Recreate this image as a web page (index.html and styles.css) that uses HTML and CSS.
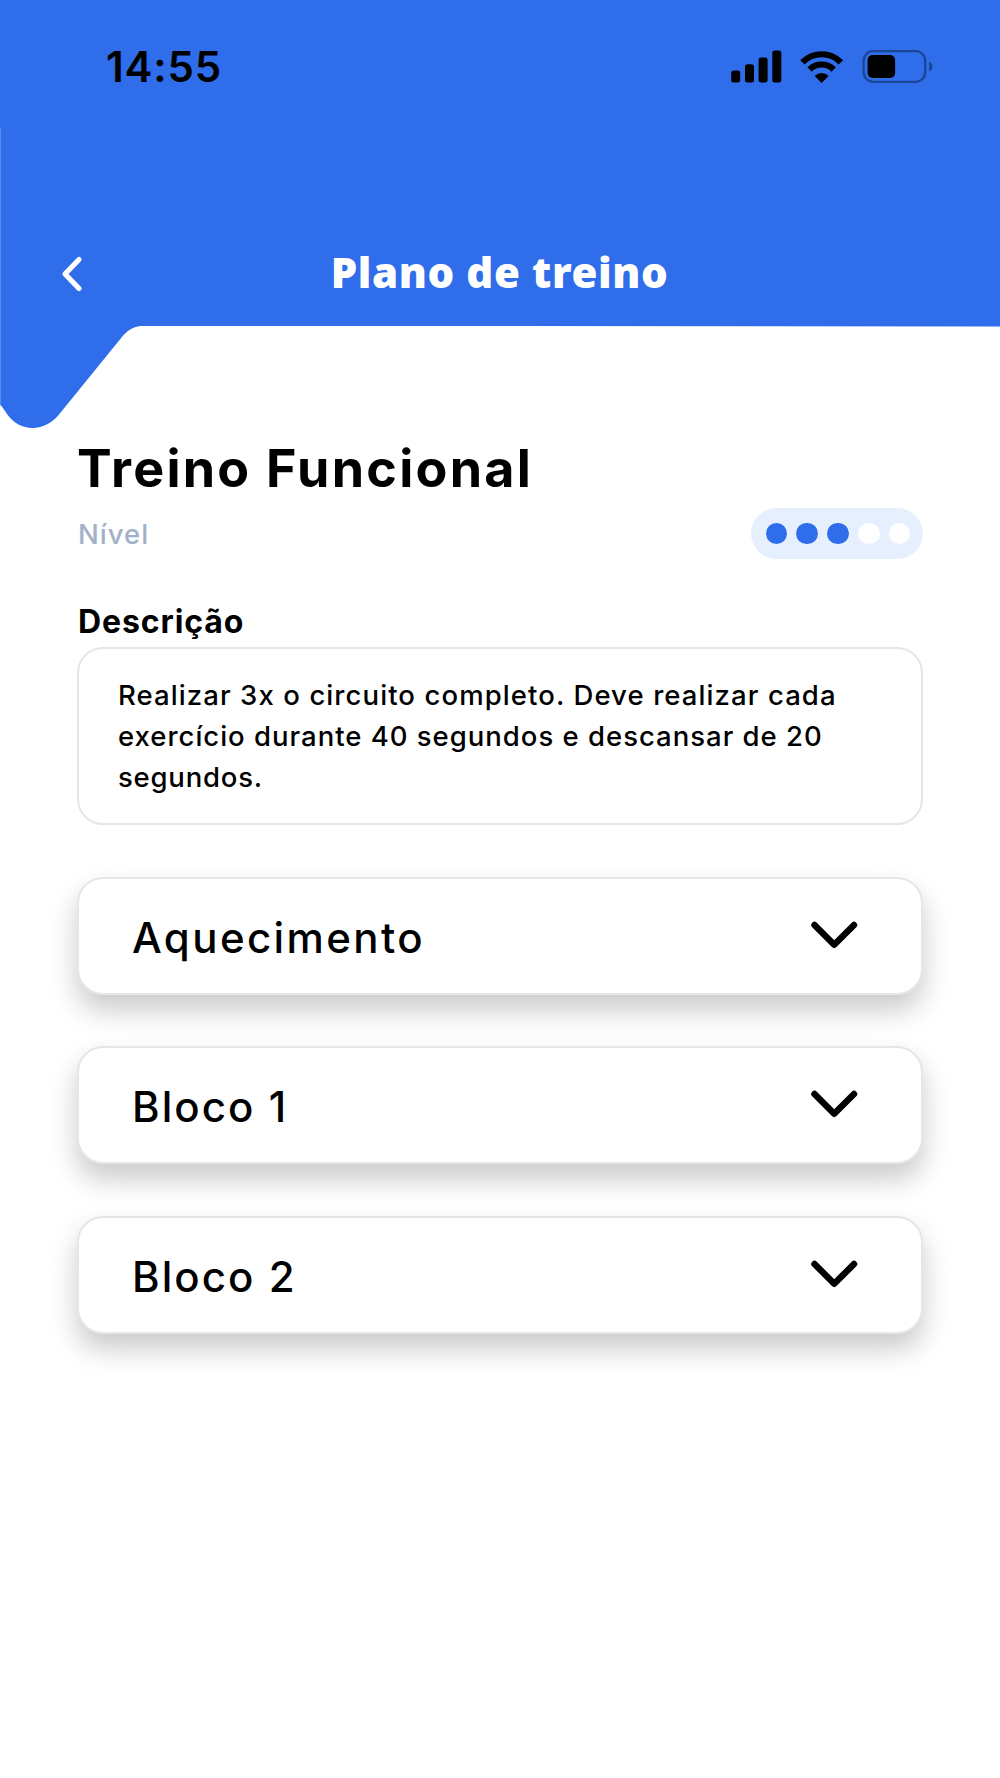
FILE: index.html
```html
<!DOCTYPE html>
<html lang="pt">
<head>
<meta charset="utf-8">
<title>Plano de treino</title>
<link rel="stylesheet" href="styles.css">
</head>
<body>
<header class="header">
  <div class="status">
    <span class="time">14:55</span>
    <svg class="status-icons" width="204" height="34" viewBox="0 0 204 34">
      <rect x="0.200" y="20.500" width="9" height="12" rx="2.500"/>
      <rect x="14" y="14.300" width="9" height="18.200" rx="2.500"/>
      <rect x="27.600" y="7.500" width="9" height="25" rx="2.500"/>
      <rect x="41.300" y="0.500" width="9" height="32" rx="2.500"/>
      <g fill="none" stroke="#000" stroke-width="6.200">
        <path d="M71.400 12.300A27 27 0 0 1 109.900 12.300"/>
        <path d="M78.600 19.500A17 17 0 0 1 102.700 19.500"/>
      </g>
      <path d="M90.650 33L83.700 25.900A10 10 0 0 1 97.600 25.900Z"/>
      <rect x="132.600" y="1.200" width="61.600" height="30.600" rx="9.500" fill="none" stroke="#1b4695" stroke-width="2.300"/>
      <rect x="136.600" y="5" width="27.500" height="23" rx="5"/>
      <path d="M198 11.500Q201.500 13.200 201.500 16.500Q201.500 19.800 198 21.500Z" fill="#1b4695"/>
    </svg>
  </div>
  <div class="nav">
    <svg class="back" width="24" height="38" viewBox="0 0 24 38"><path d="M19 4.500L5 19L19 33.500"/></svg>
    <h1 class="title">Plano de treino</h1>
  </div>
</header>
<svg class="tail" width="1000" height="104" viewBox="0 0 1000 104">
  <path d="M0 0H1000V0.500L144 -0.300Q132 0 124 8.500L61 86C46 107 20 107 7 88L1.500 80L0 79Z"/>
  <path d="M0 0H1V79H0Z" fill="#5a8cee"/>
</svg>
<main class="content">
  <h2 class="name">Treino Funcional</h2>
  <div class="level">
    <span class="level-label">Nível</span>
    <div class="dots">
      <i class="dot on"></i><i class="dot on"></i><i class="dot on"></i><i class="dot"></i><i class="dot"></i>
    </div>
  </div>
  <h3 class="label">Descrição</h3>
  <div class="description">
    <div class="line l1">Realizar 3x o circuito completo. Deve realizar cada</div>
    <div class="line l2">exercício durante 40 segundos e descansar de 20</div>
    <div class="line l3">segundos.</div>
  </div>
  <div class="blocks">
    <div class="block"><span class="block-name">Aquecimento</span><svg class="chevron" width="48" height="30" viewBox="0 0 48 30"><path d="M4.500 5L24.200 24.800L44 5"/></svg></div>
    <div class="block"><span class="block-name bloco">Bloco 1</span><svg class="chevron" width="48" height="30" viewBox="0 0 48 30"><path d="M4.500 5L24.200 24.800L44 5"/></svg></div>
    <div class="block"><span class="block-name bloco">Bloco 2</span><svg class="chevron" width="48" height="30" viewBox="0 0 48 30"><path d="M4.500 5L24.200 24.800L44 5"/></svg></div>
  </div>
</main>
</body>
</html>
```
FILE: styles.css
```css
* { box-sizing: border-box; }
body {
  margin: 0;
  min-height: 1778px;
  background: #fff;
  color: #000;
  font-family: Inter, "Liberation Sans", sans-serif;
}
h1, h2, h3 { margin: 0; }
svg { display: block; flex: none; }
.header {
  height: 326px;
  background: #2f6dea;
}
.status {
  display: flex;
  justify-content: space-between;
  height: 128px;
  padding: 49.500px 65px 0 106px;
}
.time {
  height: 34px;
  line-height: 34px;
  font-size: 42px;
  font-weight: 600;
  letter-spacing: 0.800px;
}
.nav {
  display: grid;
  grid-template-columns: 200px 1fr 202px;
  align-items: center;
  height: 198px;
  padding-top: 98px;
  padding-bottom: 9px;
  border-left: 1px solid #5a8cee;
}
.back { margin-top: 5px; margin-left: 59px; }
.back path { fill: none; stroke: #fff; stroke-width: 5.200; stroke-linecap: round; stroke-linejoin: round; }
.title {
  color: #fff;
  font-family: "Noto Sans", "Open Sans", sans-serif;
  font-size: 42px;
  font-weight: 900;
  line-height: 60px;
  letter-spacing: 0.600px;
  text-align: center;
  white-space: nowrap;
}
.tail { fill: #2f6dea; }
.content { padding: 9px 77px 0; }
.name {
  font-size: 52px;
  line-height: 60px;
  font-weight: 700;
  letter-spacing: 2.250px;
}
.level {
  display: flex;
  justify-content: space-between;
  align-items: center;
  margin-top: 9px;
}
.level-label {
  padding-left: 1px;
  color: #a2b1c8;
  font-size: 27.500px;
  font-weight: 500;
  letter-spacing: 1px;
}
.dots {
  display: flex;
  align-items: center;
  justify-content: center;
  gap: 9.300px;
  width: 172px;
  height: 51px;
  padding-left: 2px;
  border-radius: 26px;
  background: #e6effd;
}
.dot {
  width: 21.500px;
  height: 21.500px;
  border-radius: 50%;
  background: #fff;
}
.on { background: #2f6dea; }
.label {
  margin-top: 43px;
  padding-left: 1px;
  font-size: 32px;
  line-height: 40px;
  font-weight: 700;
  letter-spacing: 0.900px;
}
.description {
  height: 178px;
  margin-top: 5px;
  padding: 26px 38px 0 39px;
  border: 2px solid #e6e6e6;
  border-radius: 26px;
  font-size: 27.500px;
  line-height: 41.100px;
  font-weight: 500;
}
.line { white-space: nowrap; }
.l1 { letter-spacing: 1.090px; }
.l2 { letter-spacing: 0.990px; }
.l3 { letter-spacing: 0.780px; }
.blocks {
  display: grid;
  gap: 51.300px;
  margin-top: 52px;
}
.block {
  display: flex;
  align-items: center;
  justify-content: space-between;
  height: 118px;
  padding: 0 63px 0 53px;
  border: 2px solid #e6e6e6;
  border-radius: 26px;
  background: #fff;
  box-shadow: 0 15px 28px rgba(0, 0, 0, 0.210);
}
.block-name {
  padding-top: 3px;
  font-size: 42px;
  font-weight: 500;
  letter-spacing: 2.400px;
}
.bloco { letter-spacing: 2.050px; }
.chevron { margin-bottom: 2px; }
.chevron path { fill: none; stroke: #000; stroke-width: 6.500; stroke-linecap: round; stroke-linejoin: round; }
```
